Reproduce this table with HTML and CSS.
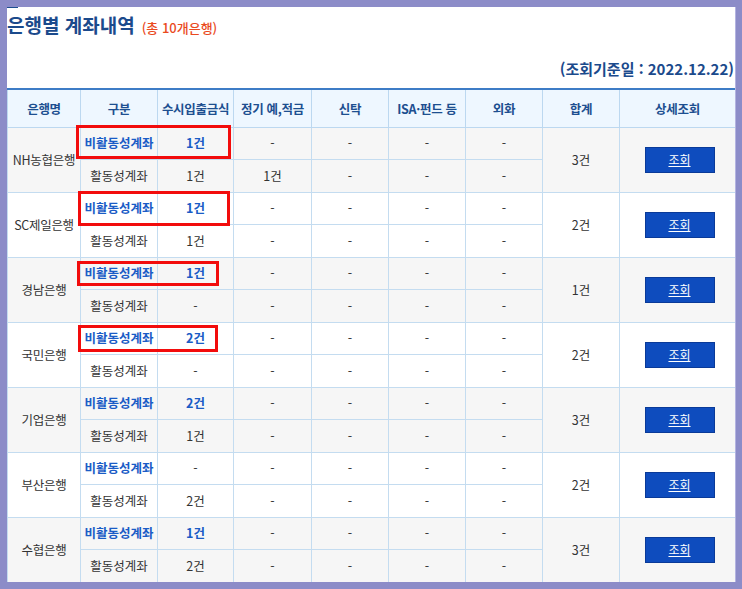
FILE: index.html
```html
<!DOCTYPE html>
<html lang="ko">
<head>
<meta charset="utf-8">
<link rel="stylesheet" href="styles.css">
</head>
<body>
<div class="frame">
  <span class="tick"></span>
  <div class="title-row">
    <h2 class="title">은행별 계좌내역</h2>
    <span class="count">(총 10개은행)</span>
  </div>
  <div class="date-row">(조회기준일 : 2022.12.22)</div>
  <table class="accounts">
    <colgroup>
      <col class="c-bank"><col class="c-kind"><col class="c-a"><col class="c-b"><col class="c-c"><col class="c-d"><col class="c-e"><col class="c-f"><col class="c-g">
    </colgroup>
    <thead>
      <tr><th>은행명</th><th>구분</th><th>수시입출금식</th><th>정기 예,적금</th><th>신탁</th><th>ISA·펀드 등</th><th>외화</th><th>합계</th><th>상세조회</th></tr>
    </thead>
    <tbody class="grey">
      <tr class="top"><td rowspan="2" class="bank">NH농협은행</td><td class="kind-in">비활동성계좌</td><td class="hl">1건</td><td>-</td><td>-</td><td>-</td><td>-</td><td rowspan="2" class="sum">3건</td><td rowspan="2"><span class="btn">조회</span></td></tr>
      <tr><td>활동성계좌</td><td>1건</td><td>1건</td><td>-</td><td>-</td><td>-</td></tr>
    </tbody>
    <tbody>
      <tr class="top"><td rowspan="2" class="bank">SC제일은행</td><td class="kind-in">비활동성계좌</td><td class="hl">1건</td><td>-</td><td>-</td><td>-</td><td>-</td><td rowspan="2" class="sum">2건</td><td rowspan="2"><span class="btn">조회</span></td></tr>
      <tr><td>활동성계좌</td><td>1건</td><td>-</td><td>-</td><td>-</td><td>-</td></tr>
    </tbody>
    <tbody class="grey">
      <tr class="top"><td rowspan="2" class="bank">경남은행</td><td class="kind-in">비활동성계좌</td><td class="hl">1건</td><td>-</td><td>-</td><td>-</td><td>-</td><td rowspan="2" class="sum">1건</td><td rowspan="2"><span class="btn">조회</span></td></tr>
      <tr><td>활동성계좌</td><td>-</td><td>-</td><td>-</td><td>-</td><td>-</td></tr>
    </tbody>
    <tbody>
      <tr class="top"><td rowspan="2" class="bank">국민은행</td><td class="kind-in">비활동성계좌</td><td class="hl">2건</td><td>-</td><td>-</td><td>-</td><td>-</td><td rowspan="2" class="sum">2건</td><td rowspan="2"><span class="btn">조회</span></td></tr>
      <tr><td>활동성계좌</td><td>-</td><td>-</td><td>-</td><td>-</td><td>-</td></tr>
    </tbody>
    <tbody class="grey">
      <tr class="top"><td rowspan="2" class="bank">기업은행</td><td class="kind-in">비활동성계좌</td><td class="hl">2건</td><td>-</td><td>-</td><td>-</td><td>-</td><td rowspan="2" class="sum">3건</td><td rowspan="2"><span class="btn">조회</span></td></tr>
      <tr><td>활동성계좌</td><td>1건</td><td>-</td><td>-</td><td>-</td><td>-</td></tr>
    </tbody>
    <tbody>
      <tr class="top"><td rowspan="2" class="bank">부산은행</td><td class="kind-in">비활동성계좌</td><td>-</td><td>-</td><td>-</td><td>-</td><td>-</td><td rowspan="2" class="sum">2건</td><td rowspan="2"><span class="btn">조회</span></td></tr>
      <tr><td>활동성계좌</td><td>2건</td><td>-</td><td>-</td><td>-</td><td>-</td></tr>
    </tbody>
    <tbody class="grey">
      <tr class="top"><td rowspan="2" class="bank">수협은행</td><td class="kind-in">비활동성계좌</td><td class="hl">1건</td><td>-</td><td>-</td><td>-</td><td>-</td><td rowspan="2" class="sum">3건</td><td rowspan="2"><span class="btn">조회</span></td></tr>
      <tr><td>활동성계좌</td><td>2건</td><td>-</td><td>-</td><td>-</td><td>-</td></tr>
    </tbody>
  </table>
  <span class="mark m1"></span>
  <span class="mark m2"></span>
  <span class="mark m3"></span>
  <span class="mark m4"></span>
</div>
</body>
</html>
```

FILE: styles.css
```css
* { box-sizing: border-box; }
html, body { margin: 0; padding: 0; background: #8c8cc8; }
body {
  font-family: "Noto Sans CJK KR", "Noto Sans", sans-serif;
  width: 742px;
  height: 589px;
  overflow: hidden;
}
.frame {
  position: relative;
  margin: 7px 7px 0 7px;
  width: 728px;
  height: 575px;
  background: #ffffff;
  box-shadow: 1px 0 0 #b3b3e0;
  overflow: hidden;
}
.tick {
  position: absolute;
  left: 0;
  top: -1px;
  width: 11px;
  height: 2px;
  background: #1d4d8f;
}
.title-row {
  display: flex;
  align-items: baseline;
  gap: 7px;
  height: 38px;
  padding-top: 5px;
}
.title {
  margin: 0;
  font-size: 19px;
  font-weight: 700;
  color: #1b4a8c;
  line-height: 26px;
  letter-spacing: 0;
}
.count {
  font-size: 13px;
  color: #ea4a1e;
  font-weight: 500;
}
.date-row {
  height: 43px;
  padding-top: 13px;
  padding-right: 1px;
  text-align: right;
  font-size: 15px;
  font-weight: 700;
  color: #1b4a8c;
  line-height: 22px;
  letter-spacing: 0;
}
.accounts {
  width: 728px;
  border-collapse: collapse;
  table-layout: fixed;
  font-size: 12.5px;
  color: #333;
}
.c-bank { width: 73px; }
.c-kind { width: 77px; }
.c-a { width: 76px; }
.c-b { width: 78px; }
.c-c, .c-d, .c-e, .c-f { width: 77px; }
.c-g { width: 116px; }
.accounts th {
  height: 38px;
  background: #eef7ff;
  border: 1px solid #bcd8f0;
  border-top: 2px solid #3d7cc6;
  color: #1d4f90;
  font-size: 12.5px;
  font-weight: 700;
  padding: 0;
  white-space: nowrap;
  letter-spacing: -0.3px;
}
.accounts td {
  height: 32.5px;
  border: 1px solid #c4dcf0;
  text-align: center;
  padding: 0;
  white-space: nowrap;
  line-height: 16px;
}
.accounts tr.top td {
  border-bottom: 1px dashed #8fbfe4;
}
.accounts tr.top td[rowspan] {
  border-bottom: 1px solid #c4dcf0;
}
.accounts td.bank { letter-spacing: -0.3px; }
.grey td { background: #f6f6f6; }
.kind-in, .hl {
  color: #1a5cc6;
  font-weight: 700;
}
.btn {
  display: inline-block;
  width: 70px;
  height: 26px;
  line-height: 24px;
  background: #0e4cbe;
  border: 1px solid #0a3a98;
  color: #ffffff;
  text-decoration: underline;
  font-size: 12px;
  margin-left: 4px;
}
.mark {
  position: absolute;
  border: 3px solid #f20c0c;
}
.m1 { left: 69px; top: 118px; width: 155px; height: 34px; }
.m2 { left: 71px; top: 184px; width: 152px; height: 35px; }
.m3 { left: 70px; top: 254px; width: 142px; height: 25px; }
.m4 { left: 71px; top: 318px; width: 140px; height: 27px; }
```
